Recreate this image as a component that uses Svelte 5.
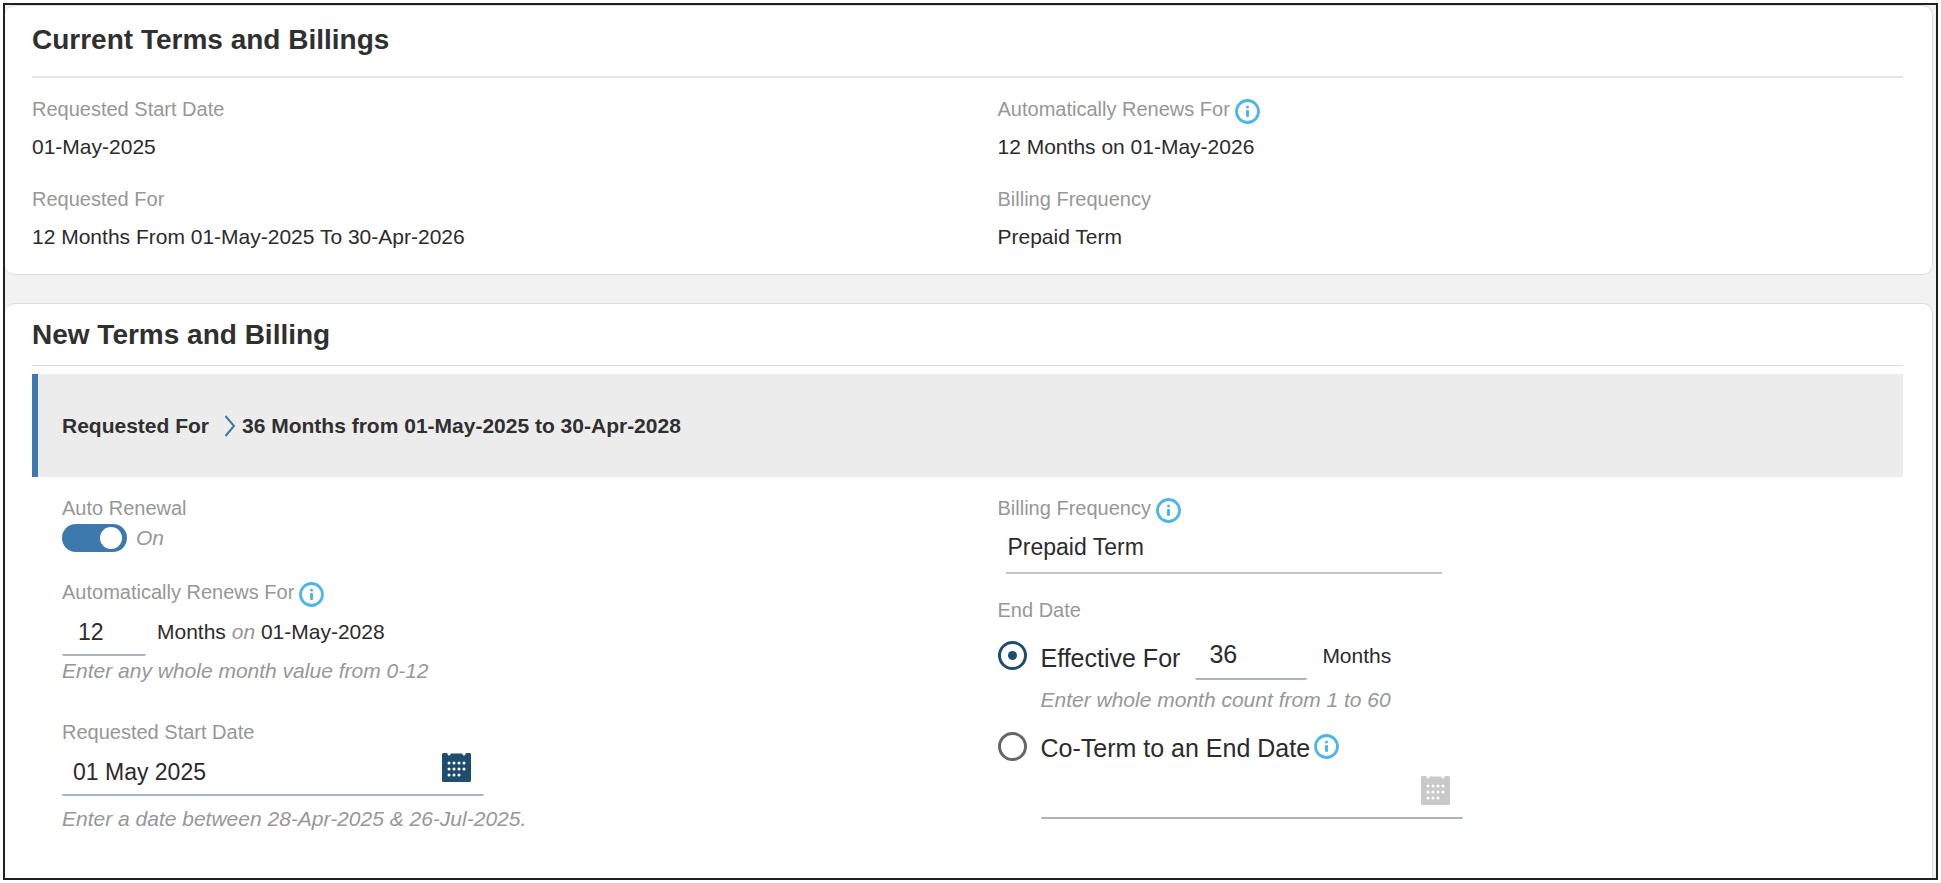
<script>
	let autoRenew = $state(true)
	let renewMonths = $state('12')
	let startDate = $state('01 May 2025')
	let frequency = $state('Prepaid Term')
	let endType = $state('effective')
	let termMonths = $state('36')
	let endDate = $state('')

	const current = [
		{ label: 'Requested Start Date', value: '01-May-2025' },
		{ label: 'Automatically Renews For', value: '12 Months on 01-May-2026', info: true },
		{ label: 'Requested For', value: '12 Months From 01-May-2025 To 30-Apr-2026' },
		{ label: 'Billing Frequency', value: 'Prepaid Term' }
	]
	const dots = [
		[7, 10], [12, 10], [17, 10], [22, 10],
		[7, 16], [12, 16], [17, 16], [22, 16],
		[7, 22], [12, 22], [17, 22]
	]
</script>

{#snippet info(about)}
	<button class="info" type="button" aria-label={`About ${about}`}>
		<svg viewBox="0 0 25 25" width="25" height="25">
			<circle cx="12.5" cy="12.5" r="11" fill="none" stroke="#4db5e8" stroke-width="2.8" />
			<circle cx="12.5" cy="8" r="1.5" fill="#4db5e8" />
			<rect x="11" y="11" width="3" height="7" rx="1" fill="#4db5e8" />
		</svg>
	</button>
{/snippet}

{#snippet calendar(disabled)}
	<button class="calendar" class:disabled type="button" aria-label="Open calendar" {disabled}>
		<svg viewBox="0 0 29 29" width="29" height="29">
			<path
				fill="currentColor"
				d="M1.500 0H5L6 2Q7 3 8 2L9 0.500H20L21 2Q22 3 23 2L24 0H27.500Q29 0 29 1.500V27.500Q29 29 27.500 29H1.500Q0 29 0 27.500V1.500Q0 0 1.500 0Z"
			/>
			{#each dots as [x, y]}
				<circle cx={x} cy={y} r="1.500" fill="#fff" />
			{/each}
		</svg>
	</button>
{/snippet}

<main class="frame">
	<section class="card current">
		<h2>Current Terms and Billings</h2>
		<dl class="summary">
			{#each current as item}
				<div>
					<dt class="label">{item.label}{#if item.info}{@render info(item.label)}{/if}</dt>
					<dd>{item.value}</dd>
				</div>
			{/each}
		</dl>
	</section>

	<section class="card new">
		<h2>New Terms and Billing</h2>
		<div class="banner">
			<span>Requested For</span>
			<svg viewBox="0 0 12 22" width="12" height="22">
				<path d="M1.500 1L10 11L1.500 21" fill="none" stroke="#3a78ac" stroke-width="2" />
			</svg>
			<span>36 Months from 01-May-2025 to 30-Apr-2028</span>
		</div>

		<form class="terms">
			<div class="column">
				<div>
					<label class="label" for="auto">Auto Renewal</label>
					<div class="toggleRow">
						<input id="auto" class="toggle" type="checkbox" role="switch" bind:checked={autoRenew} />
						<em>{autoRenew ? 'On' : 'Off'}</em>
					</div>
				</div>
				<div>
					<div class="label">
						<label for="renew">Automatically Renews For</label>{@render info('automatic renewal')}
					</div>
					<div class="monthsRow">
						<input id="renew" class="line short" type="text" bind:value={renewMonths} />
						<span>Months <em>on</em> 01-May-2028</span>
					</div>
					<p class="hint">Enter any whole month value from 0-12</p>
				</div>
				<div class="startDate">
					<label class="label" for="start">Requested Start Date</label>
					<div class="line date">
						<input id="start" type="text" bind:value={startDate} />
						{@render calendar(false)}
					</div>
					<p class="hint spaced">Enter a date between 28-Apr-2025 &amp; 26-Jul-2025.</p>
				</div>
			</div>

			<div class="column right">
				<div>
					<div class="label">
						<label for="frequency">Billing Frequency</label>{@render info('billing frequency')}
					</div>
					<select id="frequency" class="line frequency" bind:value={frequency}>
						<option>Prepaid Term</option>
						<option>Annual</option>
					</select>
				</div>
				<fieldset>
					<legend class="label">End Date</legend>
					<div class="choice">
						<input id="effective" type="radio" name="end" value="effective" bind:group={endType} />
						<label for="effective">Effective For</label>
						<input class="line term" type="text" aria-label="Effective months" bind:value={termMonths} />
						<span>Months</span>
					</div>
					<p class="hint indent">Enter whole month count from 1 to 60</p>
					<div class="choice coterm">
						<input id="coterm" type="radio" name="end" value="coterm" bind:group={endType} />
						<label for="coterm">Co-Term to an End Date</label>{@render info('co-terming')}
					</div>
					<div class="line date indent">
						<input type="text" aria-label="End date" bind:value={endDate} disabled={endType !== 'coterm'} />
						{@render calendar(endType !== 'coterm')}
					</div>
				</fieldset>
			</div>
		</form>
	</section>
</main>

<style>
	:global(body) {
		background: #fff;
	}
	.frame,
	.frame * {
		box-sizing: border-box;
	}
	.frame {
		display: flex;
		flex-direction: column;
		gap: 28px;
		min-height: calc(100vh - 6px);
		margin: 3px;
		padding-right: 3px;
		border: 2px solid #202022;
		background: #f2f2f2;
		color: #2b2b2b;
		font: 21px/30px 'Liberation Sans', Arial, sans-serif;
	}
	.card {
		padding: 0 29px 22px 27px;
		border: 1px solid #dcdcdc;
		border-left: 0;
		border-radius: 10px;
		background: #fff;
	}
	.current {
		padding-top: 17px;
	}
	.new {
		flex: 1;
		padding-top: 14px;
		border-bottom: 0;
		border-radius: 10px 10px 0 0;
	}
	h2 {
		margin: 0;
		padding-bottom: 19px;
		border-bottom: 2px solid #e6e6e6;
		color: #303030;
		font-size: 28px;
		line-height: 34px;
	}
	.new h2 {
		padding-bottom: 13px;
		border-bottom: 1px solid #dadada;
	}
	.label {
		display: flex;
		align-items: flex-end;
		gap: 5px;
		padding: 0;
		color: #979797;
		font-size: 20px;
		line-height: 30px;
	}
	.summary {
		display: grid;
		grid-template-columns: 1fr 1fr;
		gap: 22px 60px;
		margin: 16px 0 0;
	}
	dd {
		margin: 8px 0 0;
	}
	button {
		display: block;
		flex: none;
		padding: 0;
		border: 0;
		background: none;
		cursor: pointer;
	}
	button svg {
		display: block;
	}
	.banner {
		display: flex;
		align-items: center;
		min-height: 103px;
		margin-top: 8px;
		padding: 0 24px;
		border-left: 6px solid #3d79ad;
		background: #ececec;
		color: #303030;
		font-weight: bold;
	}
	.banner svg {
		margin: 0 6px 0 15px;
	}
	.terms {
		display: grid;
		grid-template-columns: 1fr 1fr;
		gap: 30px;
		margin-top: 16px;
		padding-left: 30px;
	}
	.column {
		display: flex;
		flex-direction: column;
		gap: 24px;
	}
	.right {
		gap: 21px;
	}
	em,
	.hint {
		color: #979797;
		font-style: italic;
	}
	.hint {
		margin: 0;
	}
	.spaced {
		margin-top: 8px;
	}
	.toggleRow {
		display: flex;
		align-items: center;
		gap: 9px;
	}
	.toggle {
		appearance: none;
		display: flex;
		width: 65px;
		height: 28px;
		margin: 0;
		padding: 3px 5px;
		border-radius: 14px;
		background: #aaa;
		cursor: pointer;
	}
	.toggle::before {
		content: '';
		width: 22px;
		height: 22px;
		border-radius: 50%;
		background: #fff;
	}
	.toggle:checked {
		justify-content: flex-end;
		background: #3d79ad;
	}
	.line {
		height: 49px;
		padding: 3px 11px 0;
		border: 0;
		border-bottom: 2px solid #a9b3be;
		border-radius: 2px;
		background: none;
		color: #2b2b2b;
		font: 23px/30px 'Liberation Sans', Arial, sans-serif;
	}
	.monthsRow {
		display: flex;
		align-items: center;
		gap: 11px;
	}
	.short {
		width: 84px;
		padding: 3px 16px 0;
	}
	.startDate {
		margin-top: 7px;
	}
	.date {
		display: flex;
		align-items: center;
		justify-content: space-between;
		width: 100%;
		max-width: 422px;
		padding: 0 13px 0 11px;
	}
	.date input {
		flex: 1;
		min-width: 0;
		padding: 3px 0 0;
		border: 0;
		background: none;
		color: inherit;
		font: inherit;
	}
	.calendar {
		margin-bottom: 6px;
		color: #1f4d70;
	}
	.disabled {
		color: #c9c9c9;
		cursor: default;
	}
	.frequency {
		appearance: none;
		display: block;
		width: 100%;
		max-width: 436px;
		height: 51px;
		margin-left: 8px;
		padding: 0 2px 2px;
		border-bottom-color: #c4c4c4;
		border-radius: 0;
	}
	fieldset {
		margin: 0;
		padding: 0;
		border: 0;
	}
	.choice {
		display: flex;
		align-items: center;
		margin-top: 6px;
	}
	.choice label {
		margin-left: 14px;
		padding-top: 4px;
		font-size: 25px;
	}
	.choice input[type='radio'] {
		appearance: none;
		flex: none;
		display: grid;
		place-items: center;
		width: 29px;
		height: 29px;
		margin: 0;
		border: 3px solid #666;
		border-radius: 50%;
	}
	.choice input[type='radio']:checked {
		border-color: #1f4d70;
	}
	.choice input[type='radio']:checked::before {
		content: '';
		width: 9px;
		height: 9px;
		border-radius: 50%;
		background: #1f4d70;
	}
	.term {
		width: 112px;
		margin: 0 15px;
		padding: 0 14px;
		font-size: 25px;
	}
	.indent {
		margin-left: 43px;
	}
	fieldset .hint {
		margin-top: 5px;
	}
	.coterm {
		margin-top: 14px;
	}
	.coterm .info {
		margin-left: 4px;
	}
	fieldset .date {
		margin-top: 7px;
	}
</style>
